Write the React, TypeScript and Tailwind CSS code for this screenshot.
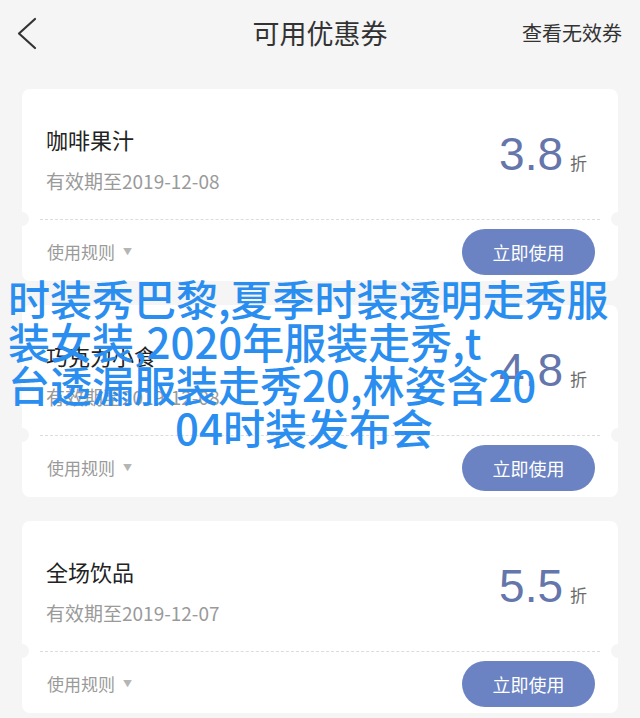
import React from "react";

const cjk = { fontFamily: '"Noto Sans CJK SC", "Noto Sans", sans-serif' };
const num = { fontFamily: '"Liberation Sans", Arial, sans-serif' };

type Coupon = { name: string; date: string; value: string };

const coupons: Coupon[] = [
  { name: "咖啡果汁", date: "有效期至2019-12-08", value: "3.8" },
  { name: "巧克力小食", date: "有效期至2019-12-08", value: "4.8" },
  { name: "全场饮品", date: "有效期至2019-12-07", value: "5.5" },
];

function Card({ c }: { c: Coupon }) {
  return (
    <div className="relative h-[192px] rounded-[8px] bg-white">
      <div className="flex h-[130px] items-start justify-between pl-[24px] pr-[31px]">
        <div className="flex flex-col pt-[35px]">
          <div className="text-[22px] leading-[30px] text-[#222]">{c.name}</div>
          <div className="mt-[14px] text-[19px] leading-[26px] text-[#9a9a9a]">{c.date}</div>
        </div>
        <div className="flex items-baseline pt-[42px]">
          <span style={num} className="text-[46px] leading-[46px] text-[#6476ab]">
            {c.value}
          </span>
          <span className="ml-[7px] text-[17px] leading-[20px] text-[#6b6b6b]">折</span>
        </div>
      </div>
      <div className="mx-[18px] border-t border-dashed border-[#dcdcdc]" />
      <div className="flex items-start justify-between pl-[25px] pr-[23px] pt-[9px]">
        <div className="flex items-center pt-[11px]">
          <span className="text-[17px] leading-[24px] text-[#9a9a9a]">使用规则</span>
          <span className="ml-[8px] text-[9px] leading-[24px] text-[#b5b5b5]">▼</span>
        </div>
        <div className="flex h-[46px] w-[133px] items-center justify-center rounded-full bg-[#6b83c3] text-[18px] text-white">
          立即使用
        </div>
      </div>
      <div className="absolute left-[-7px] top-[123px] h-[14px] w-[14px] rounded-full bg-[#f5f5f5]" />
      <div className="absolute right-[-7px] top-[123px] h-[14px] w-[14px] rounded-full bg-[#f5f5f5]" />
    </div>
  );
}

export default function App() {
  return (
    <div style={cjk} className="relative h-[718px] w-[640px] overflow-hidden bg-[#f5f5f5]">
      <div className="flex h-[66px] items-center justify-between pl-[17px] pr-[18px]">
        <svg width="22" height="34" viewBox="0 0 22 34" className="mt-[1px]">
          <polyline
            points="18,2 2,16.5 18,31"
            fill="none"
            stroke="#333"
            strokeWidth="2.2"
            strokeLinecap="round"
            strokeLinejoin="round"
          />
        </svg>
        <div className="absolute left-0 right-0 top-[14px] text-center text-[27px] leading-[38px] text-[#333] pointer-events-none">
          可用优惠券
        </div>
        <div className="text-[20px] leading-[28px] text-[#333]">查看无效券</div>
      </div>
      <div className="flex flex-col gap-[24px] px-[22px] pt-[23px]">
        {coupons.map((c) => (
          <Card key={c.value} c={c} />
        ))}
      </div>
      <div className="absolute left-[8px] top-[276px] text-[42px] font-medium leading-[43px] text-[#2a8ef0] whitespace-nowrap">
        <div>时装秀巴黎,夏季时装透明走秀服</div>
        <div>装女装,2020年服装走秀,t</div>
        <div>台透漏服装走秀20,林姿含20</div>
        <div className="pl-[167px]">04时装发布会</div>
      </div>
    </div>
  );
}
